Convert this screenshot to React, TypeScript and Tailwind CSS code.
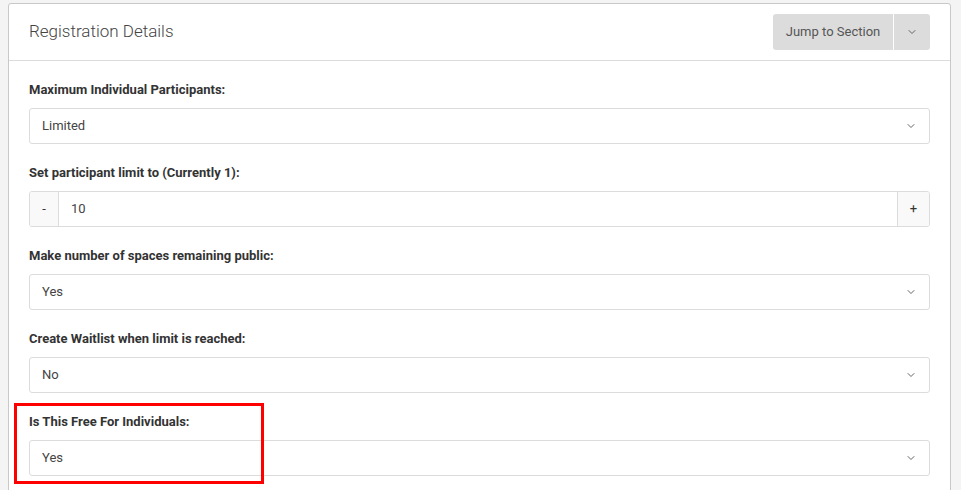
import { ChevronDown } from "lucide-react"

function Chevron() {
  return <ChevronDown className="w-3 h-3 text-[#666]" strokeWidth={2} />
}

function SelectBox({ value }: { value: string }) {
  return (
    <div className="flex items-center justify-between h-[36px] border border-[#dcdcdc] rounded-[3px] bg-white pl-3 pr-3">
      <span className="text-[13px] text-[#444]">{value}</span>
      <Chevron />
    </div>
  )
}

function Field({ label, children, highlight }: { label: string; children: React.ReactNode; highlight?: boolean }) {
  return (
    <div className="relative mb-5">
      {highlight && (
        <div className="absolute -top-[10px] -left-[15px] w-[250px] h-[81px] border-[3px] border-[#ff0000] pointer-events-none" />
      )}
      <div className="text-[13px] leading-[18px] font-bold text-[#333] mb-[9px]">{label}</div>
      {children}
    </div>
  )
}

export default function App() {
  return (
    <div className="min-h-screen bg-[#f4f4f4] pl-2 pr-[10px] pt-[3px]" style={{ fontFamily: "Roboto, 'Liberation Sans', sans-serif" }}>
      <div className="bg-white border border-[#c8c8c8] rounded-t-[3px]">
        {/* Header */}
        <div className="flex items-center justify-between h-[57px] pl-5 pr-5 border-b border-[#dcdcdc]">
          <h2 className="text-[17px] font-light text-[#444]">Registration Details</h2>
          <div className="flex h-[36px] rounded-[3px] overflow-hidden">
            <button className="px-3 w-[120px] bg-[#dcdcdc] text-[13px] text-[#555]">Jump to Section</button>
            <div className="w-px bg-white" />
            <button className="w-[36px] flex items-center justify-center bg-[#dcdcdc]">
              <Chevron />
            </button>
          </div>
        </div>

        {/* Body */}
        <div className="px-5 pt-5 pb-2">
          <Field label="Maximum Individual Participants:">
            <SelectBox value="Limited" />
          </Field>

          <Field label="Set participant limit to (Currently 1):">
            <div className="flex h-[36px] border border-[#dcdcdc] rounded-[3px] overflow-hidden">
              <div className="w-[29px] flex items-center justify-center bg-[#f9f9f9] border-r border-[#dcdcdc] text-[13px] text-[#333]">-</div>
              <div className="flex-1 flex items-center pl-3 text-[13px] text-[#444]">10</div>
              <div className="w-[32px] flex items-center justify-center bg-[#f9f9f9] border-l border-[#dcdcdc] text-[13px] text-[#333]">+</div>
            </div>
          </Field>

          <Field label="Make number of spaces remaining public:">
            <SelectBox value="Yes" />
          </Field>

          <Field label="Create Waitlist when limit is reached:">
            <SelectBox value="No" />
          </Field>

          <Field label="Is This Free For Individuals:" highlight>
            <SelectBox value="Yes" />
          </Field>
        </div>
      </div>
    </div>
  )
}
